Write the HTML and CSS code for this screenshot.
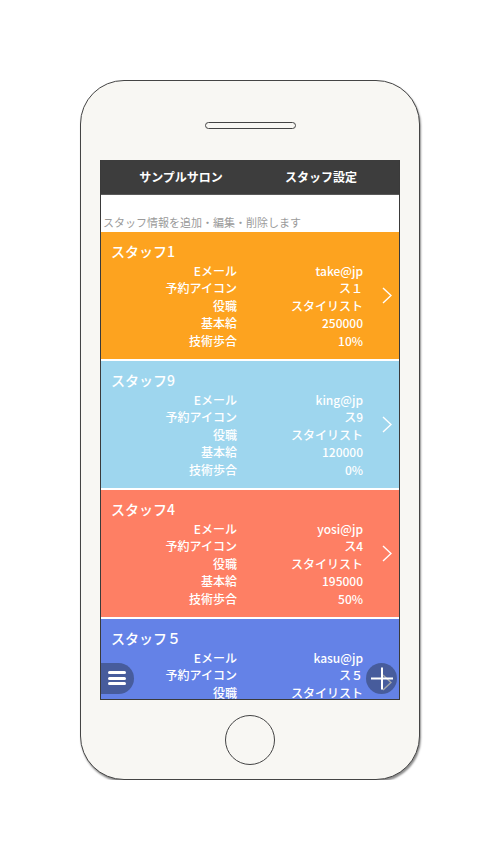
FILE: index.html
```html
<!DOCTYPE html>
<html lang="ja">
<head>
<meta charset="utf-8">
<title>スタッフ設定</title>
<link rel="stylesheet" href="styles.css">
</head>
<body>
<div class="phone">
  <div class="speaker"></div>
  <div class="screen">
    <div class="scroll">
      <header class="appbar">
        <span class="appbar-title">サンプルサロン</span>
        <span class="appbar-title">スタッフ設定</span>
      </header>
      <p class="lead">スタッフ情報を追加・編集・削除します</p>

      <div class="card orange">
        <div class="info">
          <div class="name">スタッフ1</div>
          <dl class="rows">
            <dt>Eメール</dt><dd>take@jp</dd>
            <dt>予約アイコン</dt><dd>ス１</dd>
            <dt>役職</dt><dd>スタイリスト</dd>
            <dt>基本給</dt><dd>250000</dd>
            <dt>技術歩合</dt><dd>10%</dd>
          </dl>
        </div>
        <svg class="chev" viewBox="0 0 10 17" width="10" height="17"><polyline points="1,1 9,8.5 1,16" /></svg>
      </div>

      <div class="card sky">
        <div class="info">
          <div class="name">スタッフ9</div>
          <dl class="rows">
            <dt>Eメール</dt><dd>king@jp</dd>
            <dt>予約アイコン</dt><dd>ス9</dd>
            <dt>役職</dt><dd>スタイリスト</dd>
            <dt>基本給</dt><dd>120000</dd>
            <dt>技術歩合</dt><dd>0%</dd>
          </dl>
        </div>
        <svg class="chev" viewBox="0 0 10 17" width="10" height="17"><polyline points="1,1 9,8.5 1,16" /></svg>
      </div>

      <div class="card salmon">
        <div class="info">
          <div class="name">スタッフ4</div>
          <dl class="rows">
            <dt>Eメール</dt><dd>yosi@jp</dd>
            <dt>予約アイコン</dt><dd>ス4</dd>
            <dt>役職</dt><dd>スタイリスト</dd>
            <dt>基本給</dt><dd>195000</dd>
            <dt>技術歩合</dt><dd>50%</dd>
          </dl>
        </div>
        <svg class="chev" viewBox="0 0 10 17" width="10" height="17"><polyline points="1,1 9,8.5 1,16" /></svg>
      </div>

      <div class="card blue">
        <div class="info">
          <div class="name">スタッフ５</div>
          <dl class="rows">
            <dt>Eメール</dt><dd>kasu@jp</dd>
            <dt>予約アイコン</dt><dd>ス５</dd>
            <dt>役職</dt><dd>スタイリスト</dd>
            <dt>基本給</dt><dd>180000</dd>
            <dt>技術歩合</dt><dd>20%</dd>
          </dl>
        </div>
        <svg class="chev" viewBox="0 0 10 17" width="10" height="17"><polyline points="1,1 9,8.5 1,16" /></svg>
      </div>
    </div>

    <button class="fab-menu" aria-label="メニュー">
      <span class="bar"></span><span class="bar"></span><span class="bar"></span>
    </button>
    <button class="fab-add" aria-label="追加">
      <svg viewBox="0 0 30 30" width="30" height="30"><path d="M4 15.5H26M15 4.5V26.5" /></svg>
    </button>
  </div>
  <div class="home"></div>
</div>
</body>
</html>
```

FILE: styles.css
```css
* { box-sizing: border-box; }

html, body {
  margin: 0;
  padding: 0;
  background: #ffffff;
}

body {
  font-family: "Noto Sans CJK JP", "Noto Sans", sans-serif;
  padding-top: 80px;
}

.phone {
  width: 340px;
  height: 700px;
  margin: 0 auto;
  background: #f8f7f3;
  border: 1.5px solid #444;
  border-radius: 44px;
  box-shadow: 1px 2px 2px rgba(0, 0, 0, 0.45);
  display: flex;
  flex-direction: column;
  align-items: center;
}

.speaker {
  width: 91px;
  height: 7px;
  margin-top: 40.5px;
  border: 1.5px solid #444;
  border-radius: 4px;
}

.screen {
  position: relative;
  width: 300px;
  height: 540px;
  margin-top: 31px;
  border: 1px solid #3a3a3a;
  border-top: 0;
  background: #ffffff;
  overflow: hidden;
}

.scroll {
  height: 100%;
  overflow: hidden;
}

.appbar {
  height: 35px;
  background: #3d3d3d;
  border-bottom: 1px solid #5a5a5a;
  display: grid;
  grid-template-columns: 1fr 1fr;
  align-items: center;
  padding: 0 8px 0 10px;
}

.appbar-title {
  color: #ffffff;
  font-size: 12px;
  font-weight: 700;
  text-align: center;
  line-height: 16px;
}

.lead {
  margin: 0;
  padding: 20px 0 0 2px;
  height: 37px;
  font-size: 11px;
  line-height: 15px;
  color: #9a9a9a;
}

.card {
  display: grid;
  grid-template-columns: 262px 1fr;
  align-items: center;
  height: 127px;
  margin-bottom: 2px;
  color: #ffffff;
  font-weight: 500;
}

.orange { background: #fda31f; }
.sky { background: #9ed6ee; }
.salmon { background: #fe7f64; }
.blue { background: #6482e7; }

.info {
  padding: 9px 0 9.5px;
  align-self: start;
}

.name {
  padding-left: 10px;
  font-size: 14px;
  line-height: 20px;
}

.rows {
  margin: 1px 0 0;
  display: grid;
  grid-template-columns: 136px 126px;
  font-size: 12px;
  line-height: 17.5px;
}

.rows dt,
.rows dd {
  margin: 0;
  text-align: right;
  white-space: nowrap;
}

.chev {
  margin-left: 19px;
  fill: none;
  stroke: #ffffff;
  stroke-width: 1.4;
}

.fab-menu {
  position: absolute;
  left: 0;
  top: 503px;
  width: 33px;
  height: 31px;
  border: 0;
  padding: 0 0 0 7px;
  border-radius: 0 16px 16px 0;
  background: rgba(30, 40, 52, 0.42);
  display: flex;
  flex-direction: column;
  justify-content: center;
  gap: 2.5px;
}

.fab-menu .bar {
  display: block;
  width: 18px;
  height: 3px;
  border-radius: 2px;
  background: #ffffff;
}

.fab-add {
  position: absolute;
  left: 265px;
  top: 503px;
  width: 31px;
  height: 31px;
  border: 0;
  padding: 0;
  border-radius: 50%;
  background: rgba(30, 40, 52, 0.42);
  display: flex;
  align-items: center;
  justify-content: center;
}

.fab-add svg path {
  stroke: #ffffff;
  stroke-width: 2;
  fill: none;
}

.home {
  width: 50px;
  height: 50px;
  margin-top: 15px;
  border: 1.5px solid #444;
  border-radius: 50%;
}
```
